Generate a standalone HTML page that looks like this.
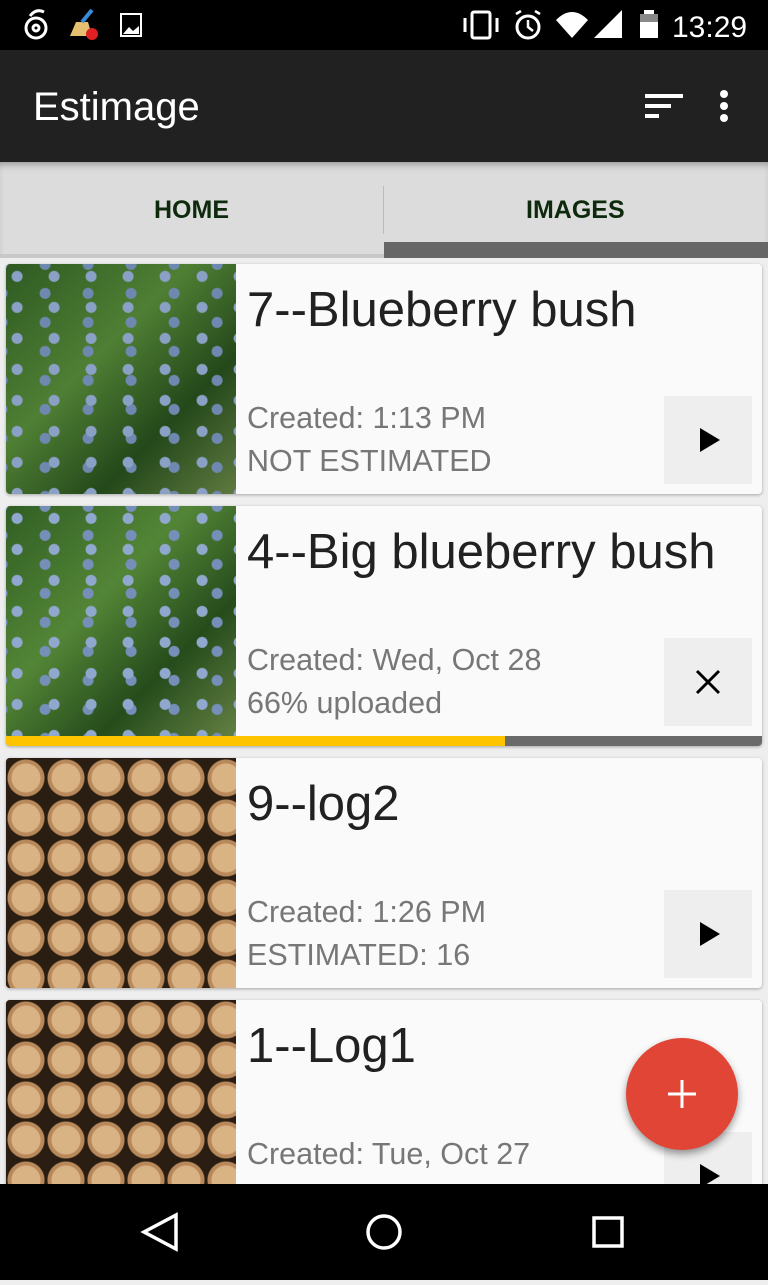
<!DOCTYPE html>
<html><head><meta charset="utf-8"><style>
*{margin:0;padding:0;box-sizing:border-box}
body{width:768px;height:1280px;overflow:hidden;background:#eeeeee;font-family:"Liberation Sans",sans-serif;position:relative}
.sb{position:absolute;left:0;top:0;width:768px;height:50px;background:#000;color:#fff}
.ab{position:absolute;left:0;top:50px;width:768px;height:112px;background:#212121}
.ab h1{position:absolute;left:33px;top:35px;font-size:40px;font-weight:normal;color:#fff}
.tabs{position:absolute;left:0;top:162px;width:768px;height:96px;background:#dcdcdc;box-shadow:inset 0 6px 8px -4px rgba(0,0,0,.35)}
.tab{position:absolute;top:34px;font-size:25px;font-weight:bold;color:#0d2a0d}
.card{position:absolute;left:6px;width:756px;background:#fafafa;border-radius:4px;overflow:hidden;box-shadow:0 1px 3px rgba(0,0,0,.3)}
.img{position:absolute;left:0;top:0;width:230px;height:230px}
.blue{background:radial-gradient(circle at 30% 40%,#8aa0c4 0 5px,transparent 6px) 0 0/37px 31px,radial-gradient(circle at 70% 60%,#6f88b0 0 5px,transparent 6px) 9px 12px/43px 29px,linear-gradient(135deg,#2e5a22,#4f7f34 40%,#24481a 70%,#5f7a40)}
.log{background:radial-gradient(circle,#d9b384 0 14px,#b8895a 15px 18px,#2a1d12 19px) 0 0/40px 40px,radial-gradient(circle,#cfa676 0 12px,transparent 13px) 20px 20px/40px 40px,#3a2816}
.t{position:absolute;left:241px;top:18px;font-size:49px;color:#212121}
.s{position:absolute;left:241px;font-size:30.5px;color:#777}
.btn{position:absolute;left:658px;top:132px;width:88px;height:88px;background:#eeeeee}
</style></head><body>
<div class="sb">
<svg width="768" height="50">
<g fill="none" stroke="#fff" stroke-width="3"><circle cx="36" cy="28" r="10"/><path d="M30 16 Q36 8 44 12"/><circle cx="36" cy="28" r="3"/></g>
<path d="M70 36 L76 22 L88 22 L92 36Z" fill="#e6c070"/><path d="M82 22 L92 10" stroke="#3a8ad8" stroke-width="4"/><circle cx="92" cy="34" r="6" fill="#e02020"/>
<rect x="121" y="14" width="20" height="22" fill="none" stroke="#fff" stroke-width="2"/><path d="M123 34 L129 27 L133 31 L139 26 L139 34Z" fill="#fff"/>
<rect x="472" y="12" width="18" height="26" rx="2" fill="none" stroke="#fff" stroke-width="3"/><path d="M465 18v14M497 18v14" stroke="#fff" stroke-width="3"/>
<circle cx="528" cy="27" r="11" fill="none" stroke="#fff" stroke-width="3"/><path d="M528 20v7l5 4M516 14l5-3M540 14l-5-3" stroke="#fff" stroke-width="2.5" fill="none"/>
<path d="M556 20 Q572 4 588 20 L572 38Z" fill="#fff"/>
<path d="M594 38 L622 10 L622 38Z" fill="#fff"/>
<rect x="640" y="14" width="18" height="24" fill="#fff"/><rect x="644" y="10" width="10" height="4" fill="#fff"/><rect x="640" y="14" width="18" height="8" fill="#888"/>
<text x="672" y="37" fill="#fff" font-size="30" font-family="Liberation Sans">13:29</text>
</svg></div>
<div class="ab"><h1>Estimage</h1>
<svg style="position:absolute;left:640px;top:40px" width="100" height="36"><path d="M5 6h38M5 16h26M5 26h14" stroke="#fff" stroke-width="4"/><circle cx="84" cy="4" r="4" fill="#fff"/><circle cx="84" cy="16" r="4" fill="#fff"/><circle cx="84" cy="28" r="4" fill="#fff"/></svg>
</div>
<div class="tabs">
<div class="tab" style="left:154px">HOME</div>
<div class="tab" style="left:526px">IMAGES</div>
<div style="position:absolute;left:383px;top:24px;width:1px;height:48px;background:#bbb"></div>
<div style="position:absolute;left:384px;top:80px;width:384px;height:16px;background:#666"></div>
<div style="position:absolute;left:0;top:92px;width:384px;height:4px;background:#c8c8c8"></div>
</div>

<div class="card" style="top:264px;height:230px"><div class="img blue"></div>
<div class="t">7--Blueberry bush</div><div class="s" style="top:137px">Created: 1:13 PM</div><div class="s" style="top:180px">NOT ESTIMATED</div>
<div class="btn"><svg width="88" height="88"><path d="M36 32 L56 44 L36 56Z" fill="#000"/></svg></div></div>

<div class="card" style="top:506px;height:240px"><div class="img blue" style="filter:brightness(1.05)"></div>
<div class="t">4--Big blueberry bush</div><div class="s" style="top:137px">Created: Wed, Oct 28</div><div class="s" style="top:180px">66% uploaded</div>
<div class="btn"><svg width="88" height="88"><path d="M33 33 L55 55 M55 33 L33 55" stroke="#000" stroke-width="3"/></svg></div>
<div style="position:absolute;left:0;top:230px;width:756px;height:10px;background:#6a6a6a"></div>
<div style="position:absolute;left:0;top:230px;width:499px;height:10px;background:#ffc400"></div></div>

<div class="card" style="top:758px;height:230px"><div class="img log"></div>
<div class="t">9--log2</div><div class="s" style="top:137px">Created: 1:26 PM</div><div class="s" style="top:180px">ESTIMATED: 16</div>
<div class="btn"><svg width="88" height="88"><path d="M36 32 L56 44 L36 56Z" fill="#000"/></svg></div></div>

<div class="card" style="top:1000px;height:230px"><div class="img log"></div>
<div class="t">1--Log1</div><div class="s" style="top:137px">Created: Tue, Oct 27</div>
<div class="btn"><svg width="88" height="88"><path d="M36 32 L56 44 L36 56Z" fill="#000"/></svg></div></div>

<div style="position:absolute;left:626px;top:1038px;width:112px;height:112px;border-radius:50%;background:#e04535;box-shadow:0 4px 8px rgba(0,0,0,.4)">
<svg width="112" height="112"><path d="M56 42v28M42 56h28" stroke="#fff" stroke-width="3"/></svg></div>

<div style="position:absolute;left:0;top:1184px;width:768px;height:96px;background:#000">
<svg width="768" height="96"><path d="M176 31 L144 48 L176 65Z" fill="none" stroke="#fff" stroke-width="3.5"/><circle cx="384" cy="48" r="16" fill="none" stroke="#fff" stroke-width="3.5"/><rect x="594" y="34" width="28" height="28" fill="none" stroke="#fff" stroke-width="3.5"/></svg></div>
</body></html>
